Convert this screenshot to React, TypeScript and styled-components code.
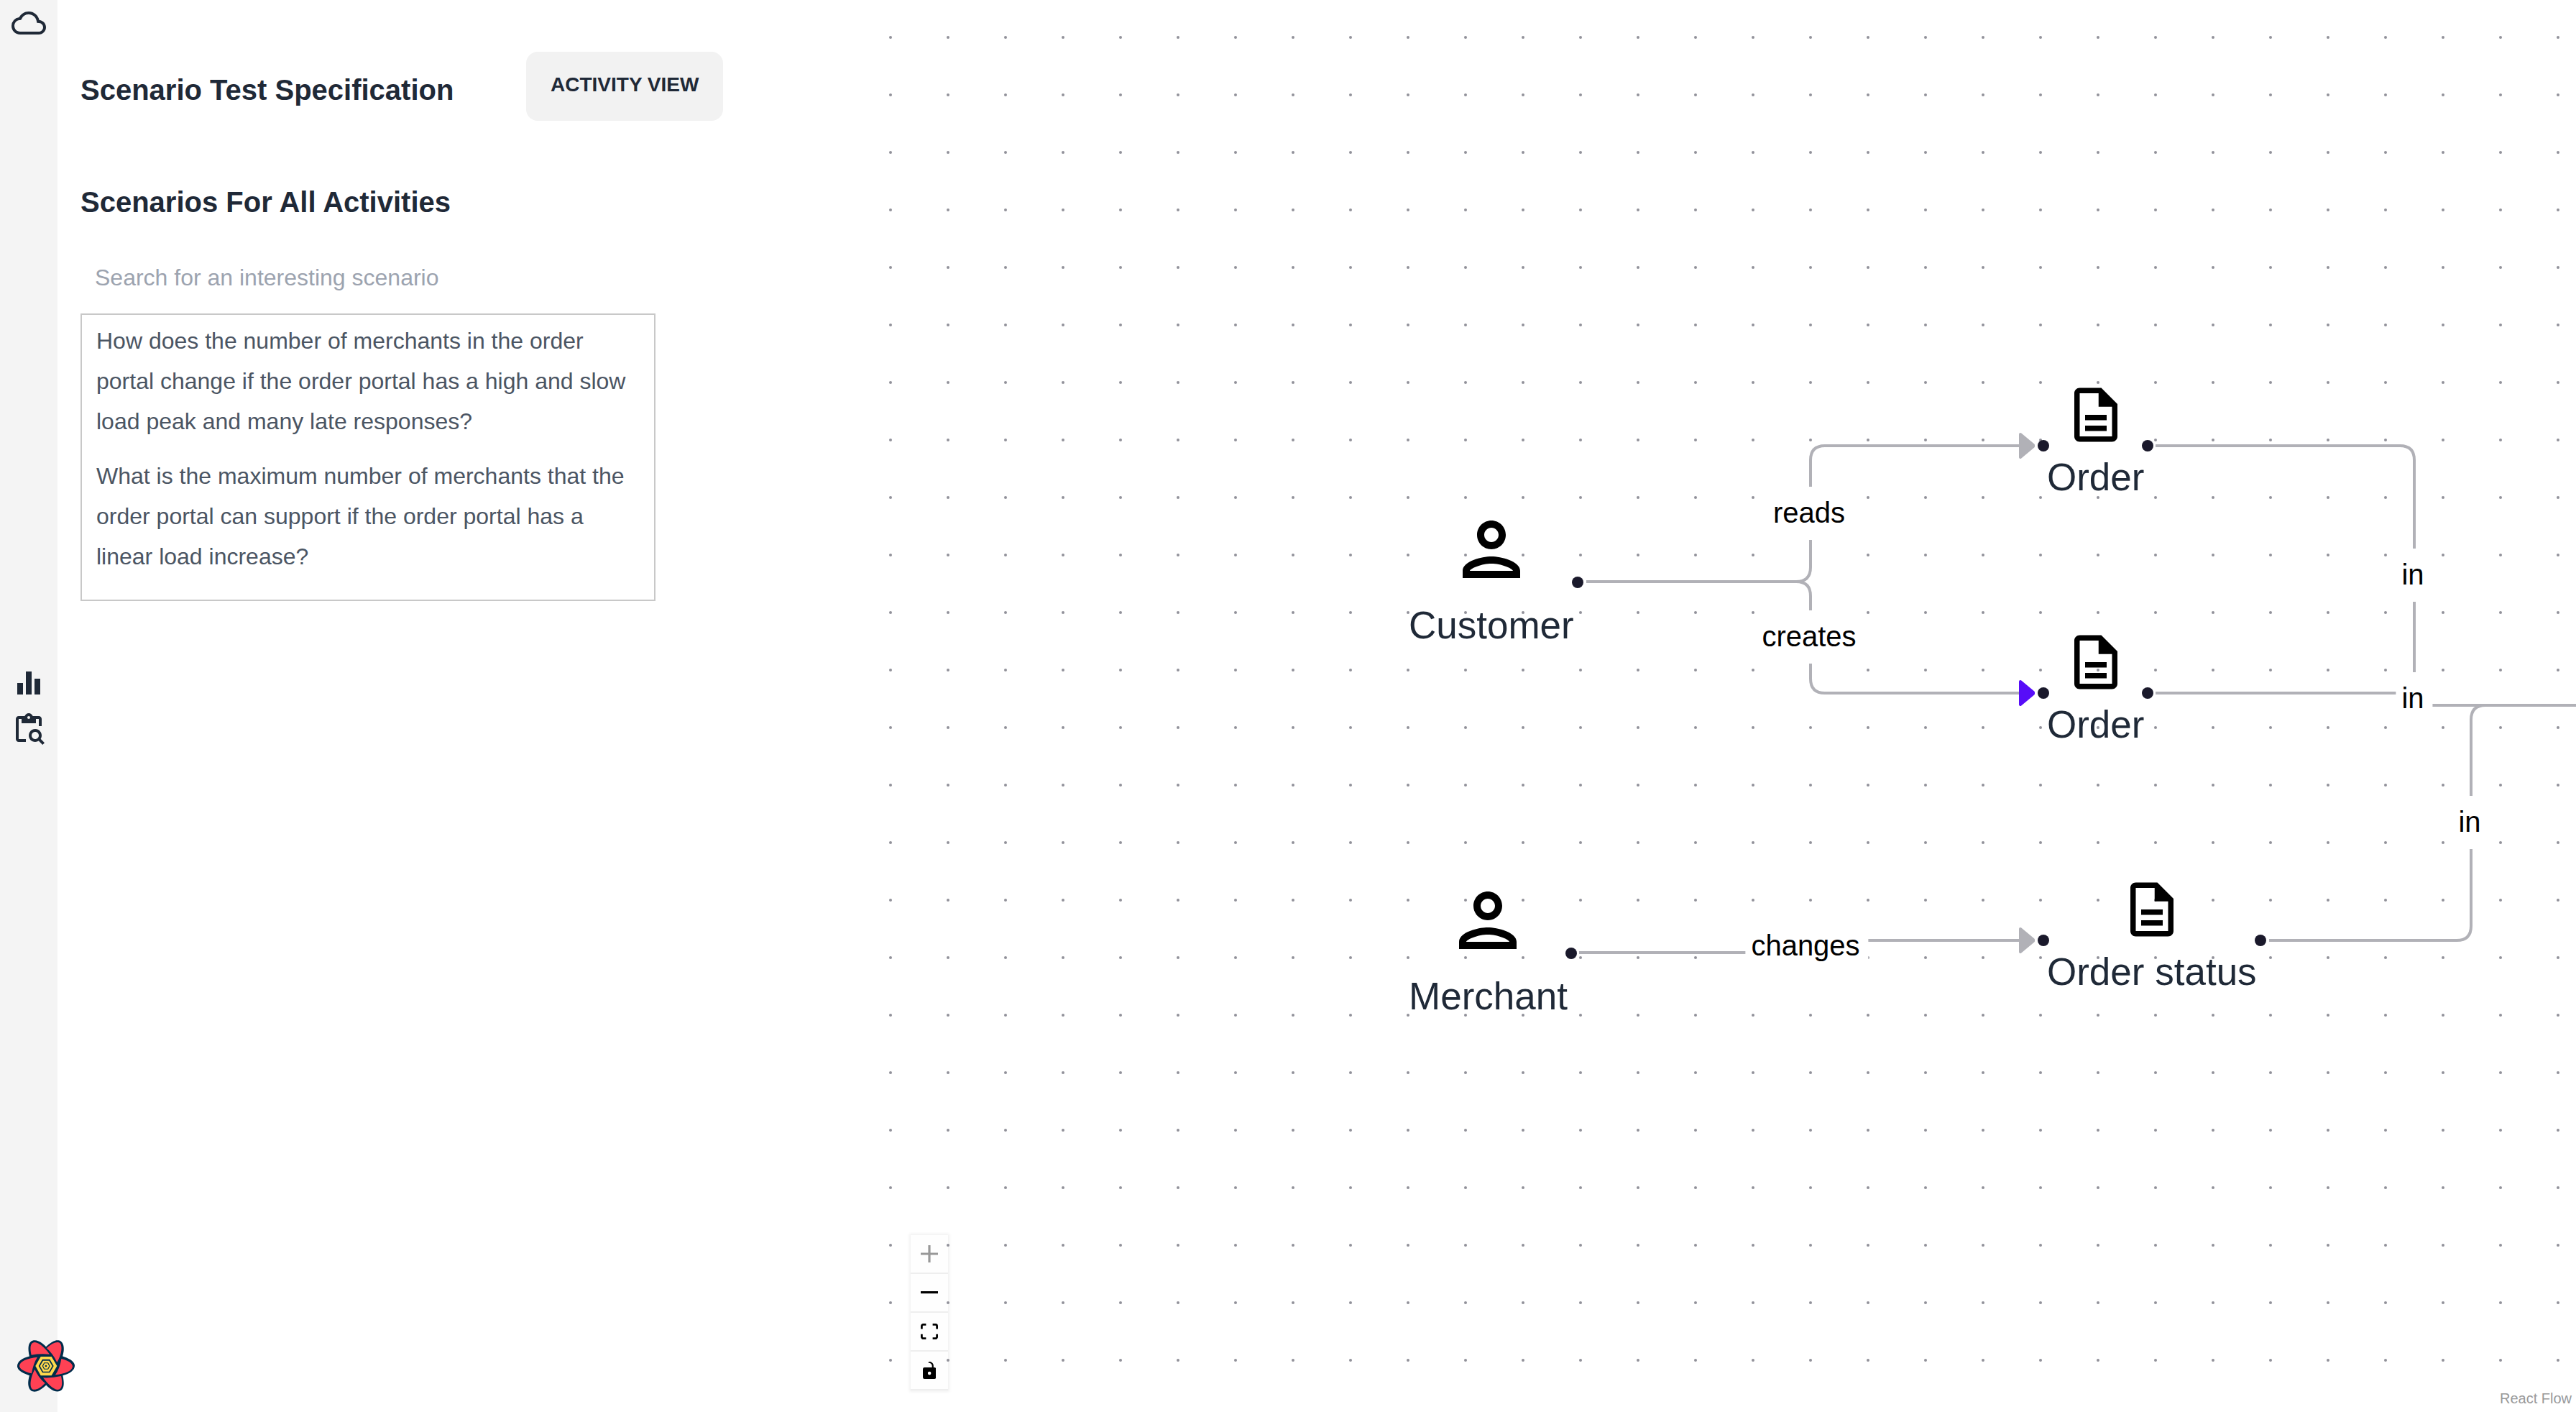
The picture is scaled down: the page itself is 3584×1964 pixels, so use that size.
import React from "react";
import styled, { createGlobalStyle, css } from "styled-components";
import {
  MdOutlineCloud,
  MdEqualizer,
  MdOutlineContentPasteSearch,
  MdOutlinePerson,
  MdOutlineDescription,
} from "react-icons/md";

const ink = "#1f2937";
const edgeGray = "#b1b1b7";
const primary = "#570df8";

const GlobalStyle = createGlobalStyle`
  *, *::before, *::after { box-sizing: border-box; }
  body {
    margin: 0;
    background: #fff;
    color: ${ink};
    font-family: "Liberation Sans", Arial, sans-serif;
  }
  h1, h2, ul { margin: 0; padding: 0; }
  button, input { font: inherit; color: inherit; }
`;

const Page = styled.div`
  display: grid;
  grid-template-columns: 80px 1156fr 2348fr;
  min-height: 100vh;
`;

/* ---------- navigation rail ---------- */

const Rail = styled.nav`
  display: grid;
  grid-template-rows: 1fr auto 1fr;
  grid-template-columns: 48px;
  padding: 8px 16px 24px;
  background: #f4f4f4;
`;

const RailGroup = styled.div<{ $end?: boolean }>`
  display: flex;
  flex-direction: column;
  gap: 16px;
  margin-top: ${(p) => (p.$end ? "auto" : "0")};
`;

const RailCenter = styled(RailGroup)`
  padding-top: 16px;
`;

const RailLink = styled.a`
  display: flex;
  color: ${ink};
  font-size: 48px;
`;

const DevtoolsButton = styled.button`
  display: flex;
  width: 80px;
  margin-left: 8px;
  padding: 0;
  border: 0;
  background: none;
  cursor: pointer;
  z-index: 1;
`;

/* ---------- scenario panel ---------- */

const Panel = styled.section`
  padding: 72px 32px 0;
`;

const PanelHeader = styled.header`
  display: flex;
  align-items: flex-start;
`;

const Title = styled.h1`
  flex: 0 0 620px;
  padding-top: 24px;
  font-size: 40px;
  line-height: 58px;
  font-weight: 700;
`;

const Subtitle = styled.h2`
  margin-top: 84px;
  font-size: 40px;
  line-height: 58px;
  font-weight: 700;
`;

const ViewButton = styled.button`
  height: 96px;
  padding: 0 34px 4px;
  border: 0;
  border-radius: 16px;
  background: #f2f2f2;
  font-size: 28px;
  font-weight: 700;
  text-transform: uppercase;
  white-space: nowrap;
  cursor: pointer;
`;

const SearchInput = styled.input`
  display: block;
  width: 100%;
  max-width: 800px;
  height: 100px;
  margin-top: 26px;
  padding: 0 20px;
  border: 0;
  outline: 0;
  background: transparent;
  font-size: 32px;
  &::placeholder { color: #9ca3af; opacity: 1; }
`;

const ScenarioList = styled.ul`
  max-width: 800px;
  padding-bottom: 20px;
  border: 2px solid #c8c8c8;
  list-style: none;
`;

const ScenarioButton = styled.button`
  display: block;
  width: 100%;
  padding: 8px 20px 12px;
  border: 0;
  background: none;
  color: #4b5563;
  font-size: 32px;
  line-height: 56px;
  text-align: left;
  cursor: pointer;
`;

/* ---------- flow canvas ---------- */

const Canvas = styled.main`
  position: relative;
  overflow: hidden;
`;

const Layer = styled.svg`
  position: absolute;
  inset: 0;
  width: 100%;
  height: 100%;
  pointer-events: none;
`;

type NodeKind = "person" | "document";

const nodeShape = {
  person: css`
    gap: 6px;
    padding: 0 5px 6px;
    svg { font-size: 120px; }
  `,
  document: css`
    gap: 2px;
    padding: 0 5px 4px;
    svg { font-size: 90px; }
  `,
};

const Node = styled.div<{ $kind: NodeKind; $x: number; $y: number }>`
  position: absolute;
  left: ${(p) => p.$x}px;
  top: ${(p) => p.$y}px;
  display: flex;
  flex-direction: column;
  align-items: center;
  svg { display: block; color: #000; }
  ${(p) => nodeShape[p.$kind]}
`;

const NodeName = styled.span`
  font-size: 53px;
  line-height: 80px;
  white-space: nowrap;
`;

const Handle = styled.i<{ $side: "left" | "right" }>`
  position: absolute;
  top: calc(50% - 8px);
  ${(p) => p.$side}: -8px;
  width: 16px;
  height: 16px;
  border-radius: 50%;
  background: #1a192b;
`;

const EdgeLabel = styled.span<{ $x: number; $y: number }>`
  position: absolute;
  left: ${(p) => p.$x}px;
  top: ${(p) => p.$y}px;
  transform: translate(-50%, -50%);
  padding: 13px 12px 15px 8px;
  border-radius: 8px;
  background: #fff;
  color: #000;
  font-size: 40px;
  line-height: 46px;
  white-space: nowrap;
`;

const Controls = styled.div`
  position: absolute;
  left: 31px;
  bottom: 30px;
  display: flex;
  flex-direction: column;
  box-shadow: 0 0 4px 2px rgba(0, 0, 0, 0.06);
`;

const ControlButton = styled.button`
  display: flex;
  align-items: center;
  justify-content: center;
  width: 52px;
  height: 54px;
  padding: 0;
  border: 0;
  border-bottom: 2px solid #eee;
  background: #fefefe;
  cursor: pointer;
  svg { max-width: 24px; max-height: 24px; fill: #000; }
  &:disabled svg { fill-opacity: 0.4; }
`;

const Attribution = styled.a`
  position: absolute;
  right: 0;
  bottom: 0;
  padding: 4px 6px;
  background: rgba(255, 255, 255, 0.5);
  color: #999;
  font-size: 20px;
  line-height: 30px;
  text-decoration: none;
`;

const scenarios = [
  "How does the number of merchants in the order portal change if the order portal has a high and slow load peak and many late responses?",
  "What is the maximum number of merchants that the order portal can support if the order portal has a linear load increase?",
];

interface FlowNode {
  id: string;
  name: string;
  kind: NodeKind;
  x: number;
  y: number;
}

const nodes: FlowNode[] = [
  { id: "customer", name: "Customer", kind: "person", x: 719, y: 704 },
  { id: "merchant", name: "Merchant", kind: "person", x: 719, y: 1220 },
  { id: "order-read", name: "Order", kind: "document", x: 1607, y: 532 },
  { id: "order-created", name: "Order", kind: "document", x: 1607, y: 876 },
  { id: "order-status", name: "Order status", kind: "document", x: 1607, y: 1220 },
];

const edges = [
  "M971 809H1263Q1283 809 1283 789V640Q1283 620 1303 620H1594",
  "M971 809H1263Q1283 809 1283 829V944Q1283 964 1303 964H1594",
  "M961 1325H1270Q1278 1325 1278 1317Q1278 1308 1287 1308H1594",
  "M1763 620H2103Q2123 620 2123 640V961Q2123 981 2143 981H2500",
  "M1763 964H2114Q2123 964 2123 972Q2123 981 2132 981H2500",
  "M1921 1308H2182Q2202 1308 2202 1288V1001Q2202 981 2222 981H2500",
];

const arrows = [
  { y: 620, color: edgeGray },
  { y: 964, color: primary },
  { y: 1308, color: edgeGray },
];

const labels = [
  { text: "reads", x: 1283, y: 714 },
  { text: "creates", x: 1283, y: 886 },
  { text: "changes", x: 1278, y: 1316 },
  { text: "in", x: 2123, y: 800 },
  { text: "in", x: 2123, y: 972 },
  { text: "in", x: 2202, y: 1144 },
];

const controls = [
  {
    label: "zoom in",
    viewBox: "0 0 32 32",
    d: "M32 18.133H18.133V32h-4.266V18.133H0v-4.266h13.867V0h4.266v13.867H32z",
    disabled: true,
  },
  { label: "zoom out", viewBox: "0 0 32 5", d: "M0 0h32v4.2H0z" },
  {
    label: "fit view",
    viewBox: "0 0 32 30",
    d: "M3.692 4.63c0-.53.4-.938.939-.938h5.215V0H4.708C2.13 0 0 2.054 0 4.63v5.216h3.692V4.631zM27.354 0h-5.2v3.692h5.17c.53 0 .984.4.984.939v5.215H32V4.631A4.624 4.624 0 0027.354 0zm.954 24.83c0 .532-.4.94-.939.94h-5.215v3.768h5.215c2.577 0 4.631-2.13 4.631-4.707v-5.139h-3.692v5.139zm-23.677.94c-.531 0-.939-.4-.939-.94v-5.138H0v5.139c0 2.577 2.13 4.707 4.708 4.707h5.138V25.77H4.631z",
  },
  {
    label: "toggle interactivity",
    viewBox: "0 0 25 32",
    d: "M21.333 10.667H19.81V7.619C19.81 3.429 16.38 0 12.19 0c-4.114 1.828-1.37 2.133.305 2.438 1.676.305 4.42 2.59 4.42 5.181v3.048H3.047A3.056 3.056 0 000 13.714v15.238A3.056 3.056 0 003.048 32h18.285a3.056 3.056 0 003.048-3.048V13.714a3.056 3.056 0 00-3.048-3.047zM12.19 24.533a3.056 3.056 0 01-3.047-3.047 3.056 3.056 0 013.047-3.048 3.056 3.056 0 013.048 3.048 3.056 3.056 0 01-3.048 3.047z",
  },
];

const QueryLogo = () => (
  <svg width="80" height="80" viewBox="0 0 240 240" aria-hidden="true">
    <path
      transform="scale(1.263) translate(-33 0)"
      fill="#002c4b"
      d="M72.72 61.34C69.63 46.36 68.97 34.87 70.97 26.53C72.16 21.57 74.33 17.52 77.63 14.6C81.12 11.52 85.54 10 90.49 10C98.67 10 107.27 13.73 116.46 20.8C120.2 23.69 124.09 27.17 128.13 31.24C128.45 30.83 128.82 30.44 129.22 30.08C140.64 19.91 150.26 13.6 158.48 11.16C163.37 9.72 167.96 9.58 172.14 10.98C176.55 12.47 180.07 15.53 182.55 19.83C186.64 26.92 187.72 36.23 186.2 47.73C185.57 52.42 184.51 57.53 183.01 63.06C183.57 63.13 184.14 63.25 184.71 63.44C199.19 68.24 209.45 73.39 215.67 79.29C219.36 82.8 221.77 86.7 222.65 91.02C223.57 95.58 222.67 100.16 220.19 104.45C216.11 111.53 208.59 117.11 197.89 121.53C193.59 123.31 188.73 124.92 183.29 126.36C183.54 126.92 183.73 127.52 183.86 128.14C186.95 143.12 187.62 154.61 185.62 162.95C184.43 167.92 182.26 171.96 178.95 174.88C175.46 177.97 171.05 179.48 166.09 179.48C157.91 179.48 149.32 175.76 140.13 168.68C136.34 165.76 132.41 162.24 128.33 158.11C127.91 158.77 127.39 159.38 126.78 159.92C115.36 170.09 105.74 176.4 97.52 178.84C92.63 180.28 88.04 180.42 83.86 179.02C79.45 177.53 75.93 174.47 73.45 170.17C69.36 163.08 68.28 153.77 69.8 142.27C70.45 137.41 71.57 132.1 73.16 126.34C72.54 126.28 71.91 126.14 71.29 125.94C56.81 121.14 46.55 115.99 40.33 110.09C36.64 106.58 34.23 102.68 33.35 98.36C32.43 93.8 33.33 89.22 35.81 84.93C39.89 77.85 47.41 72.27 58.11 67.85C62.54 66.02 67.56 64.37 73.19 62.89C72.99 62.4 72.83 61.88 72.72 61.34Z"
    />
    <g transform="translate(-72 -60)" fill="#ff4154">
      <path d="M131 134C125 106 125 82 145 81C163 82 187 103 207 131Q168 127 131 134Z" />
      <path d="M195 106C216 84 238 77 249 83C262 94 258 130 238 165Q222 130 195 106Z" />
      <path d="M256 150C288 158 303 170 303 182C300 202 270 212 231 217Q250 190 256 150Z" />
      <path d="M180 229Q218 231 255 222C261 250 262 278 240 279C222 277 200 256 180 229Z" />
      <path d="M145 194Q160 228 188 252C168 273 150 281 138 278C122 272 125 232 145 194Z" />
      <path d="M156 143Q138 172 132 211C100 204 82 192 81 180C83 160 112 148 156 143Z" />
    </g>
    <g transform="translate(-72 -60)">
      <path d="M148 180L170 141H215L238 180L215 220H170Z" fill="#ffd94c" />
      <path d="M161 180L177 152H208L224 180L208 208H177Z" fill="#002c4b" />
      <path d="M167 180L180 158H205L218 180L205 203H180Z" fill="#ffd94c" />
      <path d="M176 180L184 166H201L209 180L201 194H184Z" fill="#002c4b" />
      <path d="M180 180L186 169H199L205 180L199 191H186Z" fill="#ffd94c" />
      <circle cx="192" cy="180" r="4" fill="#002c4b" />
    </g>
  </svg>
);

export default function App() {
  return (
    <>
      <GlobalStyle />
      <Page>
        <Rail aria-label="Main">
          <RailGroup>
            <RailLink href="#home" aria-label="Home">
              <MdOutlineCloud />
            </RailLink>
          </RailGroup>
          <RailCenter>
            <RailLink href="#results" aria-label="Results">
              <MdEqualizer />
            </RailLink>
            <RailLink href="#scenarios" aria-label="Scenarios">
              <MdOutlineContentPasteSearch />
            </RailLink>
          </RailCenter>
          <RailGroup $end>
            <DevtoolsButton type="button" aria-label="Open query devtools">
              <QueryLogo />
            </DevtoolsButton>
          </RailGroup>
        </Rail>

        <Panel>
          <PanelHeader>
            <Title>Scenario Test Specification</Title>
            <ViewButton type="button">Activity View</ViewButton>
          </PanelHeader>
          <Subtitle>Scenarios For All Activities</Subtitle>
          <SearchInput
            type="search"
            aria-label="Search scenarios"
            placeholder="Search for an interesting scenario"
          />
          <ScenarioList>
            {scenarios.map((text) => (
              <li key={text}>
                <ScenarioButton type="button">{text}</ScenarioButton>
              </li>
            ))}
          </ScenarioList>
        </Panel>

        <Canvas>
          <Controls>
            {controls.map((c) => (
              <ControlButton key={c.label} type="button" aria-label={c.label} disabled={c.disabled}>
                <svg viewBox={c.viewBox}>
                  <path d={c.d} />
                </svg>
              </ControlButton>
            ))}
          </Controls>

          <Layer aria-hidden="true">
            <defs>
              <pattern id="dots" x="-37" y="12" width="80" height="80" patternUnits="userSpaceOnUse">
                <circle cx="40" cy="40" r="2" fill="#91919a" />
              </pattern>
            </defs>
            <rect width="100%" height="100%" fill="url(#dots)" />
            <g fill="none" stroke={edgeGray} strokeWidth="4">
              {edges.map((d) => (
                <path key={d} d={d} />
              ))}
            </g>
            {arrows.map((a) => (
              <path
                key={a.y}
                d={`M1575 ${a.y - 16}L1593 ${a.y - 1}V${a.y + 1}L1575 ${a.y + 16}Z`}
                fill={a.color}
                stroke={a.color}
                strokeWidth="4"
                strokeLinejoin="round"
              />
            ))}
          </Layer>

          {labels.map((l) => (
            <EdgeLabel key={`${l.text}-${l.y}`} $x={l.x} $y={l.y}>
              {l.text}
            </EdgeLabel>
          ))}

          {nodes.map((n) => (
            <Node key={n.id} $kind={n.kind} $x={n.x} $y={n.y}>
              {n.kind === "person" ? <MdOutlinePerson /> : <MdOutlineDescription />}
              <NodeName>{n.name}</NodeName>
              {n.kind === "document" && <Handle $side="left" />}
              <Handle $side="right" />
            </Node>
          ))}

          <Attribution href="#react-flow">React Flow</Attribution>
        </Canvas>
      </Page>
    </>
  );
}
